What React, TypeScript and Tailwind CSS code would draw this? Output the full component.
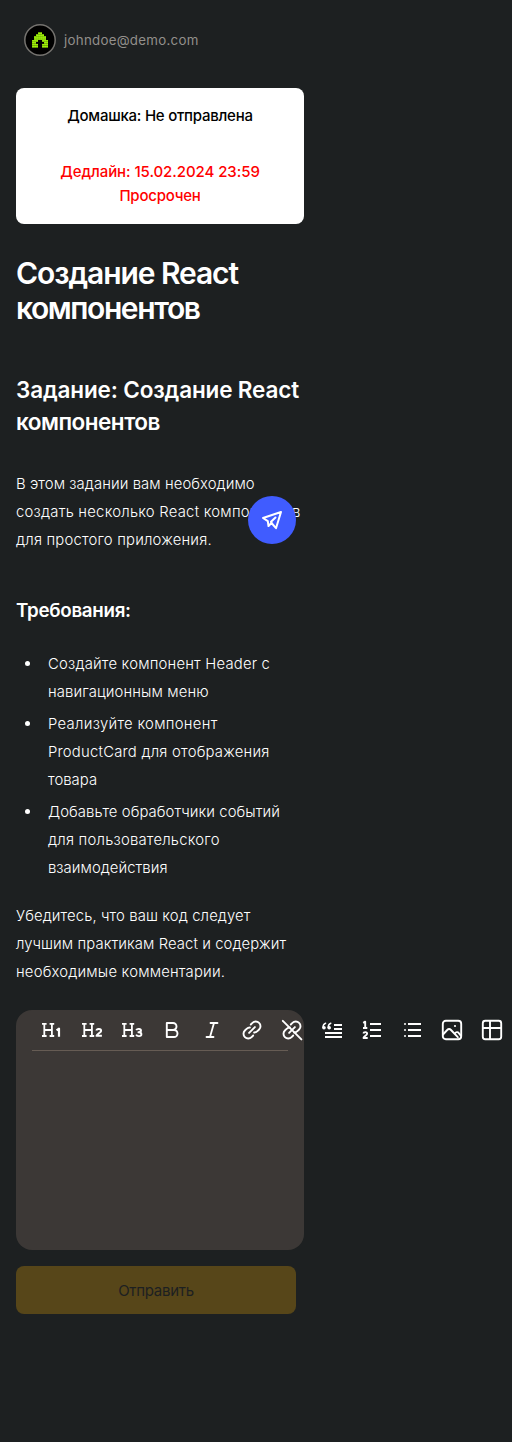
import type { ReactNode } from 'react';

function Avatar() {
  const rows = ['...XX...', '..XXXX..', '.XXXXXX.', '.XXXXXX.', 'XXX..XXX', 'XX....XX', 'XXX..XXX', 'XXX..XXX'];
  return (
    <svg className="size-8 shrink-0" viewBox="0 0 32 32">
      <circle cx="16" cy="16" r="15.2" fill="#000" stroke="#75736f" strokeWidth="1.5" />
      {rows.map((row, y) =>
        row.split('').map((cell, x) =>
          cell === 'X' ? (
            <rect key={`${x}-${y}`} x={8.1 + x * 2} y={8.3 + y * 1.93} width="1.85" height="1.8" fill="#a8ff0a" />
          ) : null,
        ),
      )}
    </svg>
  );
}

function Icon({ children, width = 1.9 }: { children: ReactNode; width?: number }) {
  return (
    <svg
      className="size-6"
      viewBox="0 0 24 24"
      fill="none"
      stroke="white"
      strokeWidth={width}
      strokeLinecap="round"
      strokeLinejoin="round"
    >
      {children}
    </svg>
  );
}

function HeadingIcon({ children }: { children: ReactNode }) {
  return (
    <Icon width={1.8}>
      <path d="M2 5.9h4.6M9.6 5.9h4.6M2 18h4.6M9.6 18h4.6M4.3 6v12M11.9 6v12M4.3 12h7.6" strokeLinecap="butt" />
      {children}
    </Icon>
  );
}

const chain = (
  <>
    <path d="M9.1 14.9 14.9 9.1" />
    <path d="M10.8 6.5 12.4 4.9a4.6 4.6 0 0 1 6.7 0 4.6 4.6 0 0 1 0 6.6l-1.7 1.7a4.6 4.6 0 0 1-3.3 1.3" />
    <path d="M13.2 17.5l-1.6 1.6a4.6 4.6 0 0 1-6.7 0 4.6 4.6 0 0 1 0-6.6l1.7-1.7a4.6 4.6 0 0 1 3.3-1.3" />
  </>
);

const tools: ReactNode[] = [
  <HeadingIcon>
    <path d="M16.6 12.4l2.4-1.8v8.2" strokeWidth="2.2" strokeLinecap="butt" />
  </HeadingIcon>,
  <HeadingIcon>
    <path d="M16.5 12.5c.2-2.3 4.7-2.1 4.6.4 0 1.7-4.3 3-4.6 4.9h5.4" strokeWidth="2" strokeLinecap="butt" />
  </HeadingIcon>,
  <HeadingIcon>
    <path d="M16.2 12.2c1-2 4.8-1.5 4.8.4 0 1.2-1 1.7-2.6 1.7 1.8 0 3 .6 3 1.9 0 2.4-4.3 2.6-5.3.4" strokeWidth="1.9" strokeLinecap="butt" />
  </HeadingIcon>,
  <Icon>
    <path d="M6.8 5h6.2a3.5 3.5 0 0 1 0 7H6.8zM6.8 12h7.2a3.5 3.5 0 0 1 0 7H6.8z" />
  </Icon>,
  <Icon width={1.8}>
    <path d="M10.5 5h7M6.5 19h7M14 5 10 19" />
  </Icon>,
  <Icon width={1.9}>{chain}</Icon>,
  <Icon width={1.9}>
    {chain}
    <path d="M2.8 2.8 21.4 21.4" />
  </Icon>,
  <Icon width={1.5}>
    <path d="M14 7h8M14 11h8M5 15h17M5 19h17" strokeWidth="2" strokeLinecap="butt" />
    <path d="M5.6 5.2C3.8 5.7 3 7 3 9.5M10.8 5.2C9 5.7 8.2 7 8.2 9.5" />
    <circle cx="4" cy="9.8" r="1.8" fill="white" stroke="none" />
    <circle cx="9.2" cy="9.8" r="1.8" fill="white" stroke="none" />
  </Icon>,
  <Icon width={1.9}>
    <path d="M10 6h11M10 12h11M10 18h11" strokeLinecap="butt" />
    <path d="M3.2 4.8 5.2 3.7v6.6M3 10h4.3" strokeLinecap="butt" />
    <path d="M3.4 15.5c.3-2 3.8-1.8 3.7.2 0 1.5-3.3 2.6-3.6 4.3h4.2" strokeLinecap="butt" />
  </Icon>,
  <Icon width={1.9}>
    <path d="M8 6h13M8 12h13M8 18h13" strokeLinecap="butt" />
    <path d="M4 6h2M4 12h2M4 18h2" strokeLinecap="butt" strokeWidth="1.6" />
  </Icon>,
  <Icon width={1.9}>
    <rect x="2.8" y="2.8" width="18.4" height="18.4" rx="3" />
    <path d="M3 16.5 7.2 12c1.2-1.3 2.6-1.3 3.8 0l6.8 7.2M14.8 15.5c1.2-1.6 3-1.8 4-.4l2 2.5" />
    <circle cx="15" cy="8" r="1.1" fill="white" stroke="none" />
  </Icon>,
  <Icon width={1.9}>
    <rect x="2.8" y="2.8" width="18.4" height="18.4" rx="2.5" />
    <path d="M3 10h18M10 3v18" />
  </Icon>,
];

const items: ReactNode[] = [
  <>
    <span className="tracking-[0.2px]">Создайте компонент Header с</span>
    <br />
    <span className="tracking-[0.12px]">навигационным меню</span>
  </>,
  <>
    <span className="tracking-[0.29px]">Реализуйте компонент</span>
    <br />
    <span className="tracking-[0.22px]">ProductCard для отображения</span>
    <br />
    <span className="tracking-[0.05px]">товара</span>
  </>,
  <>
    <span className="tracking-[0.08px]">Добавьте обработчики событий</span>
    <br />
    <span className="tracking-[0.22px]">для пользовательского</span>
    <br />
    <span className="tracking-[0.05px]">взаимодействия</span>
  </>,
];

export default function App() {
  return (
    <div className="min-h-[1442px] w-[512px] overflow-hidden bg-[#1d2021] px-4 pt-6 font-['Inter',sans-serif] text-[14.85px] font-[350] text-white">
      <header className="ml-2 flex h-8 items-center gap-2">
        <Avatar />
        <span className="pt-px text-[13.3px] font-normal tracking-[0.28px] text-[#928f8b]">johndoe@demo.com</span>
      </header>

      <main className="relative mt-8 w-72 whitespace-nowrap">
        <section className="h-[136px] rounded-lg bg-white py-4 text-center text-[15px] leading-6 font-medium text-black">
          <p className="tracking-[-0.24px]">Домашка: Не отправлена</p>
          <p className="mt-8 tracking-[-0.07px] text-[#ff0000]">Дедлайн: 15.02.2024 23:59</p>
          <p className="tracking-[-0.24px] text-[#ff0000]">Просрочен</p>
        </section>

        <h1 className="mt-8 text-[30px] leading-[35px] font-semibold">
          <span className="tracking-[-1.08px]">Создание React</span>
          <br />
          <span className="tracking-[-1.42px]">компонентов</span>
        </h1>

        <h2 className="mt-12 text-[22.5px] leading-8 font-semibold">
          <span className="tracking-[-0.15px]">Задание: Создание React</span>
          <br />
          <span className="tracking-[-0.5px]">компонентов</span>
        </h2>

        <p className="mt-8 leading-7">
          <span className="tracking-[0.08px]">В этом задании вам необходимо</span>
          <br />
          <span className="tracking-[0.23px]">создать несколько React компонентов</span>
          <br />
          <span className="tracking-[0.19px]">для простого приложения.</span>
        </p>

        <h3 className="mt-[41px] text-[18.75px] leading-8 font-semibold tracking-[-0.29px]">Требования:</h3>

        <ul className="mt-[23px] flex flex-col gap-1 leading-7">
          {items.map((item, i) => (
            <li key={i} className="flex">
              <span className="mt-[11px] mr-[18px] ml-[9px] size-[5px] shrink-0 rounded-full bg-white" />
              <div>{item}</div>
            </li>
          ))}
        </ul>

        <p className="mt-5 leading-7">
          <span className="tracking-[0.11px]">Убедитесь, что ваш код следует</span>
          <br />
          <span className="tracking-[0.08px]">лучшим практикам React и содержит</span>
          <br />
          <span className="tracking-[0.19px]">необходимые комментарии.</span>
        </p>

        <section className="mt-6 h-60 rounded-2xl bg-[#3c3836] px-4">
          <div className="flex h-[41px] border-b border-[#665c54]">
            {tools.map((tool, i) => (
              <button key={i} className="flex h-10 w-10 shrink-0 items-center justify-center">
                {tool}
              </button>
            ))}
          </div>
        </section>

        <button className="mt-4 h-12 w-[280px] rounded-lg bg-[#574619] pt-0.5 text-[15px] font-normal tracking-[-0.28px] text-[#1d2021]">
          Отправить
        </button>

        <button className="absolute top-[408px] right-2 flex size-12 items-center justify-center rounded-full bg-[#405cff]">
          <Icon width={2}>
            <path d="M21 4 3 10l4.8 3.2L8.5 18l3-3 4.5 5.2z" />
            <path d="M15.5 9.5 11 13.8l.8 1.8" />
          </Icon>
        </button>
      </main>
    </div>
  );
}
